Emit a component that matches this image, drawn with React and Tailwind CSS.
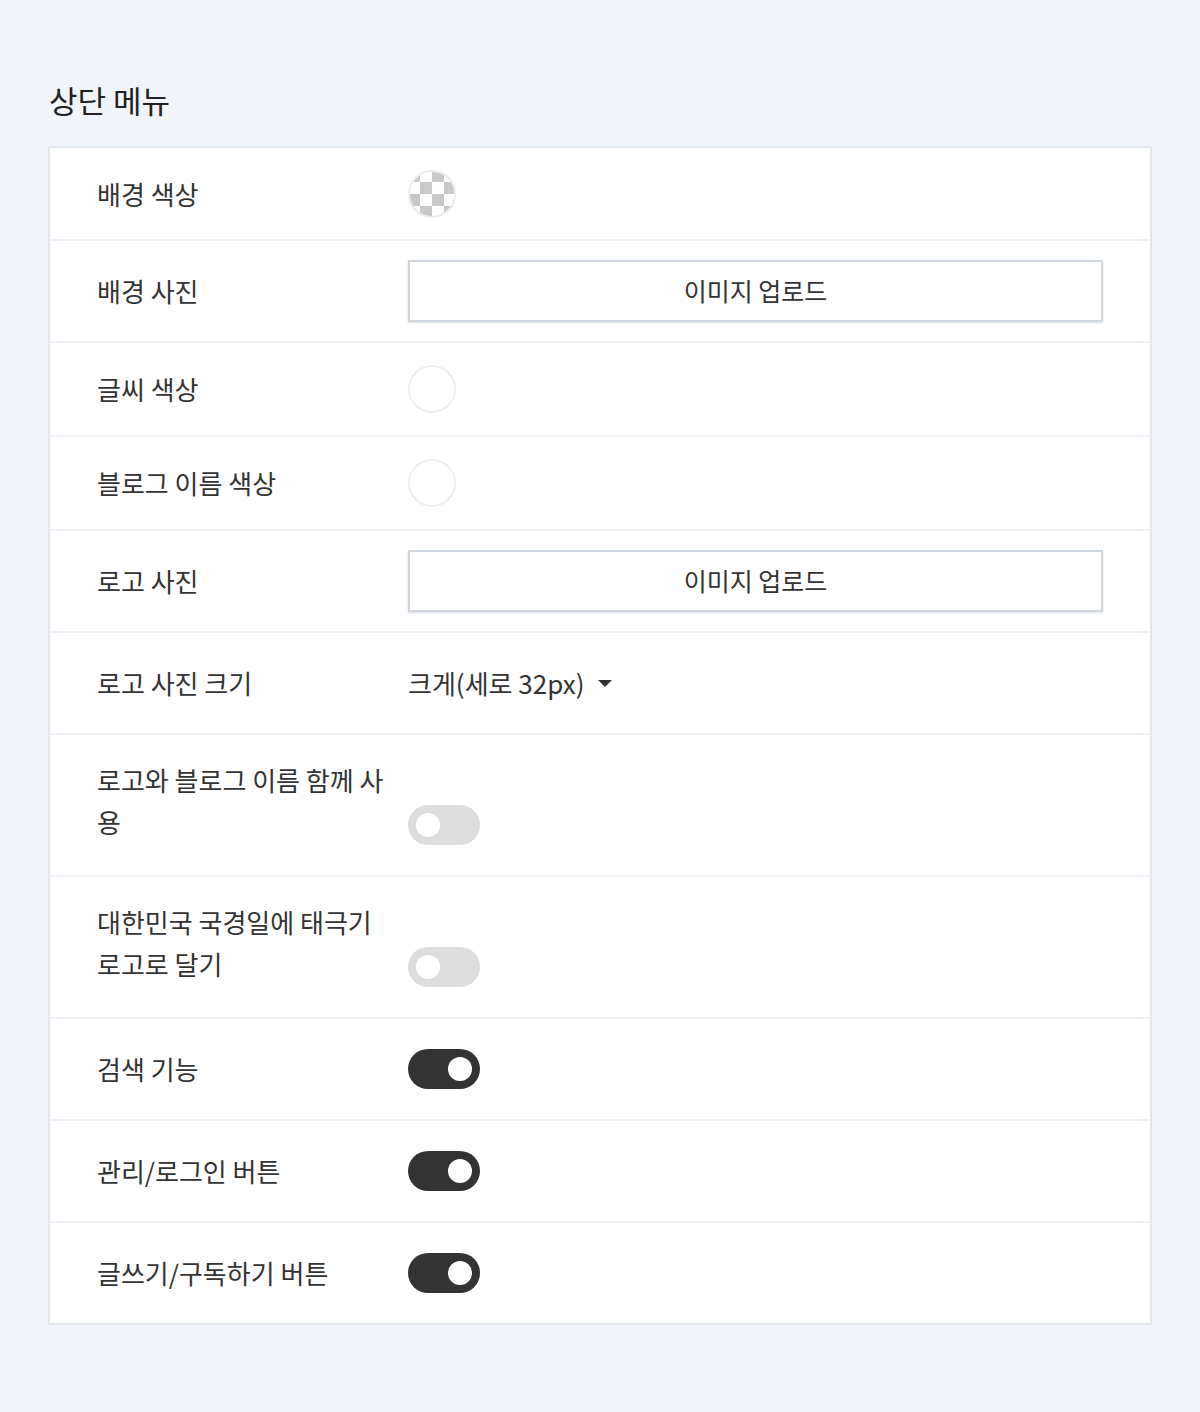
import React from 'react';

const font = { fontFamily: '"Noto Sans CJK KR", "Noto Sans", sans-serif' };

function Checker() {
  return (
    <svg width="48" height="48" viewBox="0 0 48 48" className="block">
      <defs>
        <pattern id="chk" width="24" height="24" patternUnits="userSpaceOnUse">
          <rect width="24" height="24" fill="#fff" />
          <rect width="12" height="12" fill="#c9c9c9" />
          <rect x="12" y="12" width="12" height="12" fill="#c9c9c9" />
        </pattern>
        <clipPath id="circ">
          <circle cx="24" cy="24" r="23" />
        </clipPath>
      </defs>
      <rect width="48" height="48" fill="url(#chk)" clipPath="url(#circ)" />
      <circle cx="24" cy="24" r="23" fill="none" stroke="#ececec" strokeWidth="2" />
    </svg>
  );
}

function Swatch() {
  return <div className="w-12 h-12 rounded-full border-2 border-[#efefef] bg-white" />;
}

function UploadButton() {
  return (
    <button className="w-full h-[62px] bg-white border-2 border-[#cfd6e0] shadow-[0_1px_2px_rgba(0,0,0,0.12)] text-[25px] text-[#333]">
      이미지 업로드
    </button>
  );
}

function Toggle({ on }) {
  return (
    <div
      className={`w-[72px] h-10 rounded-full flex items-center px-2 ${
        on ? 'bg-[#333] justify-end' : 'bg-[#dddddd] justify-start'
      }`}
    >
      <div className="w-6 h-6 rounded-full bg-white" />
    </div>
  );
}

function Row({ label, height, twoLine, last, children }) {
  return (
    <div
      className={`flex px-[47px] ${twoLine ? 'items-start pt-[24px]' : 'items-center'} ${
        last ? '' : 'border-b-2 border-[#eef1f5]'
      } ${height}`}
    >
      <div className="w-[300px] mr-[11px] shrink-0 text-[26px] leading-[42px] text-[#333]">{label}</div>
      <div className={`flex-1 flex items-center ${twoLine ? 'mt-[46px]' : ''}`}>{children}</div>
    </div>
  );
}

export default function App() {
  return (
    <div className="min-h-[1412px] bg-[#f1f4f8] px-12 pt-[77px] pb-[87px]" style={font}>
      <h2 className="text-[31px] leading-[45px] text-[#222] mb-[24px] pl-px">상단 메뉴</h2>

      <div className="bg-white border-2 border-[#e2e6ee]">
        <Row label="배경 색상" height="h-[93px]">
          <Checker />
        </Row>
        <Row label="배경 사진" height="h-[102px]">
          <UploadButton />
        </Row>
        <Row label="글씨 색상" height="h-[94px]">
          <Swatch />
        </Row>
        <Row label="블로그 이름 색상" height="h-[94px]">
          <Swatch />
        </Row>
        <Row label="로고 사진" height="h-[102px]">
          <UploadButton />
        </Row>
        <Row label="로고 사진 크기" height="h-[102px]">
          <button className="flex items-center text-[26px] text-[#333] leading-[42px]">
            크게(세로 32px)
            <svg width="14" height="8" viewBox="0 0 14 8" className="ml-[13px] mt-[2px]">
              <path d="M0 0 L14 0 L7 7 Z" fill="#333" />
            </svg>
          </button>
        </Row>
        <Row label="로고와 블로그 이름 함께 사용" height="h-[142px]" twoLine>
          <Toggle on={false} />
        </Row>
        <Row label="대한민국 국경일에 태극기 로고로 달기" height="h-[142px]" twoLine>
          <Toggle on={false} />
        </Row>
        <Row label="검색 기능" height="h-[102px]">
          <Toggle on />
        </Row>
        <Row label="관리/로그인 버튼" height="h-[102px]">
          <Toggle on />
        </Row>
        <Row label="글쓰기/구독하기 버튼" height="h-[100px]" last>
          <Toggle on />
        </Row>
      </div>
    </div>
  );
}
